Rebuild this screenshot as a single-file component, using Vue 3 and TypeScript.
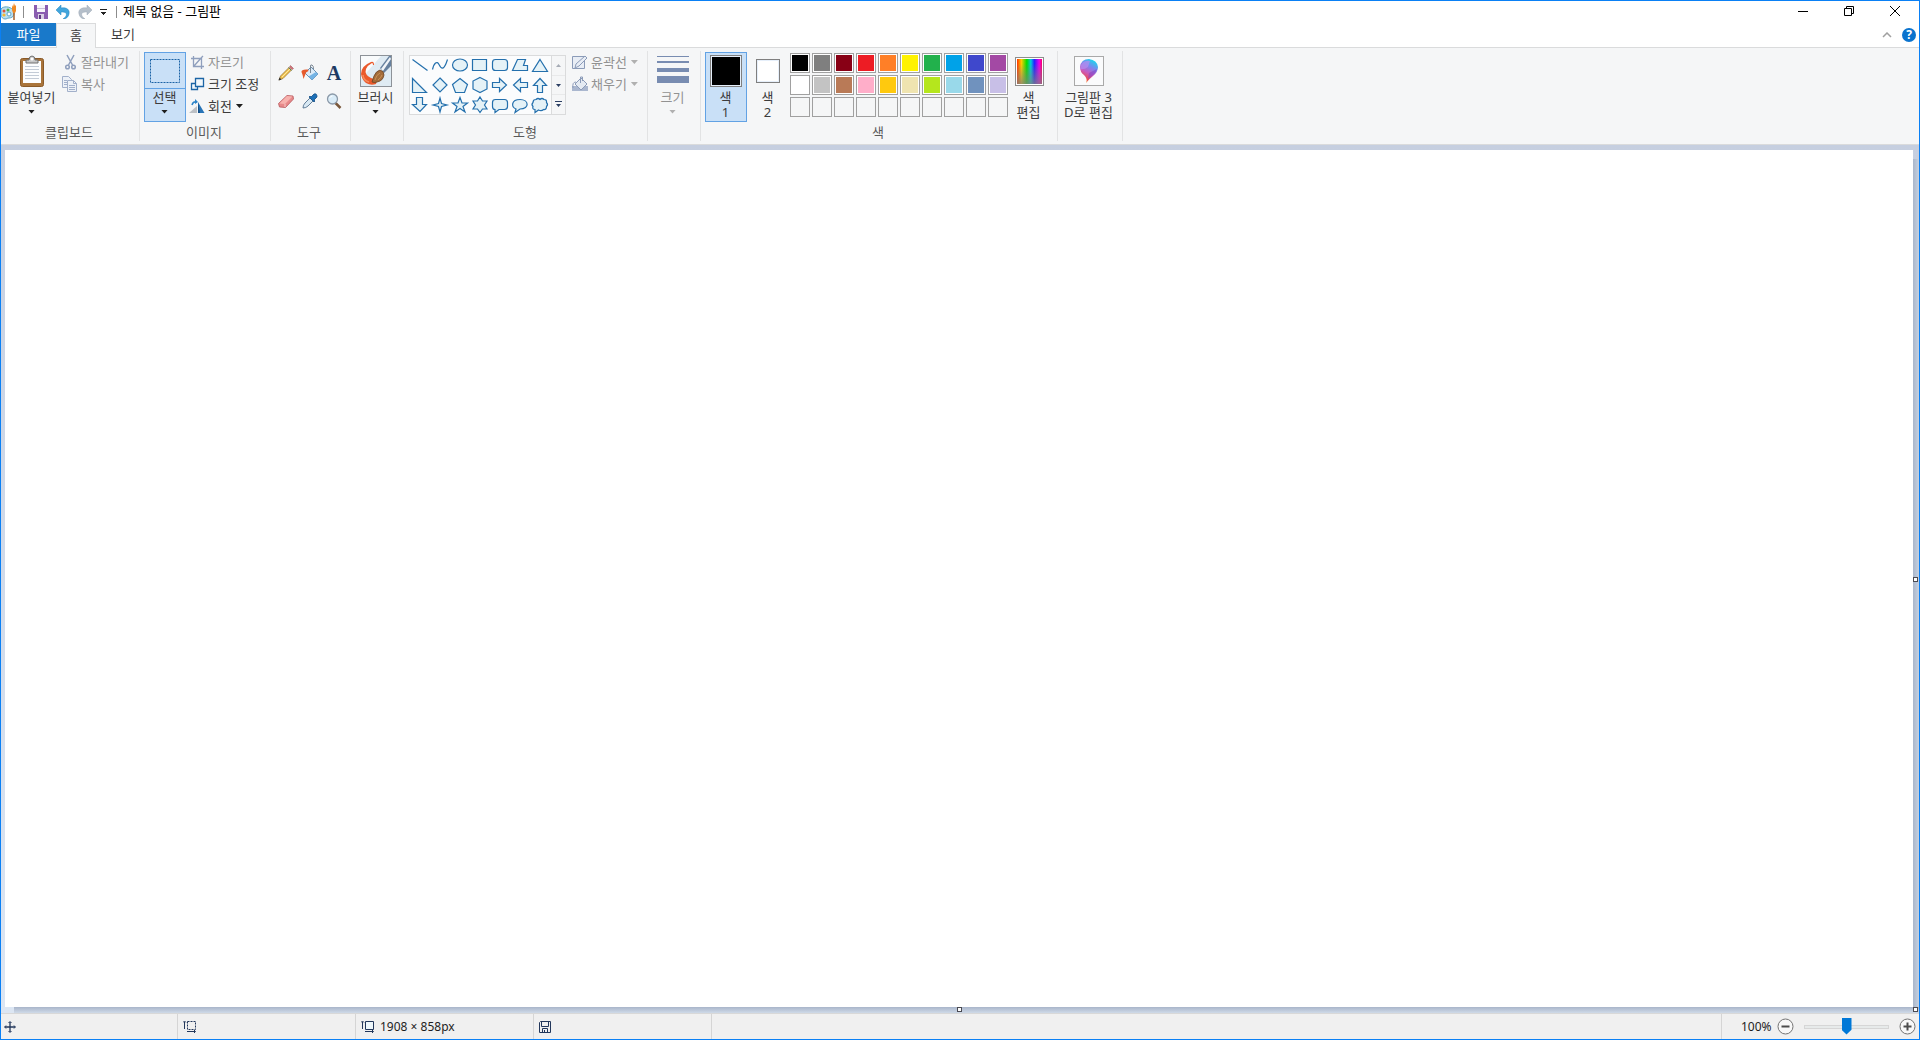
<script setup lang="ts">
import { ref } from 'vue'

interface Shape {
  name: string
  d: string
}

const shapes: Shape[] = [
  { name: '선', d: 'M2.5 4.5L17.5 15.5' },
  { name: '곡선', d: 'M2.5 14.5C4 8 7 5.500 9 9.500S13.500 17 17.500 4.500' },
  { name: '타원', d: 'M2.500 10a7.500 6 0 1 0 15 0a7.500 6 0 1 0-15 0z' },
  { name: '직사각형', d: 'M2.500 4.500h14v11h-14z' },
  { name: '둥근 직사각형', d: 'M5.500 4.500h9q3 0 3 3v5q0 3-3 3h-9q-3 0-3-3v-5q0-3 3-3z' },
  { name: '다각형', d: 'M7.500 4.500h8l-2 6h4v5h-15z' },
  { name: '삼각형', d: 'M10 4.500L17.500 16.500h-15z' },
  { name: '직각 삼각형', d: 'M2.500 3.500L16.500 17.500h-14z' },
  { name: '다이아몬드', d: 'M10 3L17 10L10 17L3 10z' },
  { name: '오각형', d: 'M10 3.500L17.500 9.500L14.500 17.500h-9L2.500 9.500z' },
  { name: '육각형', d: 'M10 2.500L17 6v8L10 17.500L3 14V6z' },
  { name: '오른쪽 화살표', d: 'M2.500 7.500h7v-4L16.500 10l-7 6.500v-4h-7z' },
  { name: '왼쪽 화살표', d: 'M17.500 7.500h-7v-4L3.500 10l7 6.500v-4h7z' },
  { name: '위쪽 화살표', d: 'M7.500 17.500v-7h-4L10 3.500l6.500 7h-4v7z' },
  { name: '아래쪽 화살표', d: 'M6.500 2.500v7h-4L10 16.500l6.500-7h-4v-7z' },
  { name: '4각별', d: 'M10 3L11.500 8.500L17 10L11.500 11.500L10 17L8.500 11.500L3 10L8.500 8.500z' },
  { name: '5각별', d: 'M10 2.500L12 8H17.500L13 11.500L15 17L10 13.500L5 17L7 11.500L2.500 8H8z' },
  { name: '6각별', d: 'M10 2L12.500 6H17L14.500 10L17 14H12.500L10 17.500L7.500 14H3L5.500 10L3 6H7.500z' },
  { name: '둥근 사각형 설명선', d: 'M5.500 4.500h9q3 0 3 3v4q0 3-3 3H9l-4 3v-3q-2.500 0-2.500-3v-4q0-3 3-3z' },
  { name: '타원형 설명선', d: 'M6 14C1 12 1 4.500 10 4.500s10 9.500 0 9.500L5 17.500z' },
  { name: '구름 모양 설명선', d: 'M6 4.500q2-2 4 0q2-2 4 0q3 0 2.500 3q2 2 0 4q0 3.500-3 3q-2 2-5 .5L5 17.500v-3q-3 0-2-3q-2-2 0-4q0-3 3-3z' }
]

const palette: (string | null)[] = [
  '#000000', '#7f7f7f', '#880015', '#ed1c24', '#ff7f27', '#fff200', '#22b14c', '#00a2e8', '#3f48cc', '#a349a4',
  '#ffffff', '#c3c3c3', '#b97a57', '#ffaec9', '#ffc90e', '#efe4b0', '#b5e61d', '#99d9ea', '#7092be', '#c8bfe7',
  null, null, null, null, null, null, null, null, null, null
]

const color1 = ref('#000000')
const color2 = ref('#ffffff')
const active = ref<1 | 2>(1)
const zoom = ref(50)

function pick(color: string | null) {
  if (!color) return
  if (active.value === 1) color1.value = color
  else color2.value = color
}
</script>

<template>
  <div class="window">
    <header class="titlebar">
      <svg class="app-icon" width="16" height="18" viewBox="0 0 16 18">
        <path d="M0 6C2 3 9 3 12 7c2 3 1 8-4 8-2 0-2 1-4 1-2 0-4-2-4-4z" fill="#b9dff1" stroke="#5fa6c9" />
        <circle cx="3" cy="8" r="1.500" fill="#e0533a" /><circle cx="7" cy="7" r="1.500" fill="#55b04b" />
        <circle cx="3" cy="12" r="1.600" fill="#f2b632" /><circle cx="8" cy="11" r="2" fill="#fff" stroke="#5fa6c9" />
        <path d="M13 9v8" stroke="#a5602c" stroke-width="1.500" /><path d="M11 2l1 2 1-4 1 3 1-1v6l-1 2h-2l-1-3z" fill="#f08a24" />
      </svg>
      <span class="tb-sep"></span>
      <button class="quick" aria-label="저장">
        <svg width="14" height="14" viewBox="0 0 14 14"><path d="M0 0h14v14H2l-2-2z" fill="#8a5db0" /><path d="M3 0h8v7H3z" fill="#f7f5fb" /><path d="M3 3h8v1H3z" fill="#c9bfd8" /><path d="M4 9h6v5H4z" fill="#d9d0e4" /><path d="M5 10h2v4H5z" fill="#5c3a82" /></svg>
      </button>
      <button class="quick" aria-label="실행 취소">
        <svg width="14" height="14" viewBox="0 0 14 14"><path d="M0 5L5 0v3c6-1 9 2 8 6-.5 3-3 5-6 5 3-2 4-4 3-6-1-1-3-1-5-1v3z" fill="#41a5dc" stroke="#2387c3" stroke-width=".5" /></svg>
      </button>
      <button class="quick" aria-label="다시 실행">
        <svg width="14" height="14" viewBox="0 0 14 14"><path d="M14 5L9 0v3C3 2 0 5 1 9c.5 3 3 5 6 5-3-2-4-4-3-6 1-1 3-1 5-1v3z" fill="#b5bfca" stroke="#9eabb8" stroke-width=".5" /></svg>
      </button>
      <button class="quick more" aria-label="빠른 실행 도구 모음 사용자 지정">
        <svg width="7" height="7" viewBox="0 0 7 7" shape-rendering="crispEdges"><path d="M0 0h7v1H0zM1 3h5v1H5v1H4v1H3V5H2V4H1z" fill="#222" /></svg>
      </button>
      <span class="tb-sep"></span>
      <h1>제목 없음 - 그림판</h1>
      <div class="controls">
        <button aria-label="최소화"><svg width="12" height="12" viewBox="0 0 12 12"><path d="M1 6.500h10" stroke="#000" /></svg></button>
        <button aria-label="이전 크기로 복원"><svg width="12" height="12" viewBox="0 0 12 12"><path d="M1.500 3.500h7v7h-7zM3.500 3V1.500h7v7H9" fill="none" stroke="#000" /></svg></button>
        <button aria-label="닫기"><svg width="12" height="12" viewBox="0 0 12 12"><path d="M1 1l10 10M11 1L1 11" stroke="#000" /></svg></button>
      </div>
    </header>

    <nav class="tabs">
      <button class="tab file">파일</button>
      <button class="tab current">홈</button>
      <button class="tab view">보기</button>
      <div class="tab-tools">
        <button aria-label="리본 최소화"><svg width="10" height="6" viewBox="0 0 10 6"><path d="M1 5l4-4 4 4" fill="none" stroke="#a0a0a0" stroke-width="1.500" /></svg></button>
        <button class="help" aria-label="도움말">?</button>
      </div>
    </nav>

    <main class="ribbon">
      <section class="group clipboard">
        <div class="body">
          <button class="big wide">
            <span class="pic">
              <svg width="26" height="32" viewBox="0 0 26 32">
                <rect x="1.500" y="3.500" width="23" height="28" rx="2" fill="#a9743a" stroke="#8a5a28" />
                <rect x="4" y="6" width="18" height="22" fill="#fcfdfe" /><path d="M6 11.500h14M6 14.500h14M6 17.500h14M6 20.500h14M6 23.500h14" stroke="#c3cbd6" />
                <path d="M7 8V5h3q0-4 3-4t3 4h3v3z" fill="#c8c8c8" stroke="#707070" /><circle cx="13" cy="4" r="1.500" fill="#fff" />
              </svg>
            </span>
            <span class="line">붙여넣기</span>
            <span class="line"><i class="arrow"></i></span>
          </button>
          <div class="stack">
            <button class="small" disabled>
              <svg width="16" height="16" viewBox="0 0 16 16" fill="none" stroke="#8f9fbd" stroke-width="1.500"><path d="M5 1l5.500 10M12 1L6.500 11" /><circle cx="5.500" cy="13" r="1.800" /><circle cx="11.500" cy="13" r="1.800" /></svg>잘라내기
            </button>
            <button class="small" disabled>
              <svg width="16" height="16" viewBox="0 0 16 16" fill="#edf1f7" stroke="#a2b0ca"><path d="M.5.5h6l3 3v8h-9z" /><path d="M2 4.500h3M2 6.500h3M2 8.500h3" /><path d="M5.500 4.500h6l3 3v8h-9zM11.500 4.500v3h3M7 9.500h6M7 11.500h6M7 13.500h6" /></svg>복사
            </button>
          </div>
        </div>
        <h2>클립보드</h2>
      </section>

      <section class="group image">
        <div class="body">
          <button class="big selected split">
            <span class="pic">
              <svg width="32" height="26" viewBox="0 0 32 26"><rect x="1.500" y="1.500" width="29" height="23" fill="none" stroke="#1a62a5" stroke-dasharray="2 1" /></svg>
            </span>
            <span class="line">선택</span>
            <span class="line"><i class="arrow"></i></span>
          </button>
          <div class="stack">
            <button class="small" disabled>
              <svg width="16" height="16" viewBox="0 0 16 16" fill="none" stroke="#8f9fbd"><path d="M2 4.500h10.500V15M4.500 2v10.500H15M5 12l8-9M13 3l1-1" stroke-width="1.300" /></svg>자르기
            </button>
            <button class="small">
              <svg width="16" height="16" viewBox="0 0 16 16" fill="#f2f8fc" stroke="#1c65a5" stroke-width="1.300"><path d="M2.500 7.500h6v6h-6z" /><path d="M6.500 2.500h8v8h-8z" /></svg>크기 조정
            </button>
            <button class="small">
              <svg width="16" height="16" viewBox="0 0 16 16"><path d="M0 15h8V8z" fill="#bcc0c5" /><path d="M9 15V4l6.500 11z" fill="#2874b7" /><path d="M9 15V4l2 11z" fill="#124f88" /><path d="M3 7q1-4 5-3" fill="none" stroke="#2d84c8" stroke-width="1.500" /><path d="M6 1l3 3-3 2z" fill="#2d84c8" /></svg>회전<i class="arrow"></i>
            </button>
          </div>
        </div>
        <h2>이미지</h2>
      </section>

      <section class="group tools">
        <div class="body tool-grid">
          <button aria-label="연필"><svg width="16" height="16" viewBox="0 0 16 16"><path d="M1 15l1.500-4 8.500-8.500 2.500 2.500L5 13.500z" fill="#f1c34f" stroke="#8c6a30" stroke-width=".7" /><path d="M4 12l8-8" stroke="#fbe7a4" /><path d="M11.500 2l1-1.500 3 3L14 4.500z" fill="#d97178" stroke="#8f5055" stroke-width=".5" /><path d="M10.500 2.500l3 3" stroke="#5f7f52" /><path d="M.5 15.500l1-3 2 2z" fill="#333" /></svg></button>
          <button aria-label="색 채우기"><svg width="18" height="18" viewBox="0 0 18 18"><path d="M4 9l6-6 7 7-6 6z" fill="#dcebf8" stroke="#6c8fb0" /><path d="M7.500 12.500L15 8l2 2-6 6z" fill="#75b4e5" /><path d="M9.500 9V2q0-1.500 1.500-1t1.500 4" fill="none" stroke="#7a8794" /><path d="M7 5.500Q0 5 .5 8q1 2 2 7l2-5q0-2 3-3z" fill="#e65a2c" /></svg></button>
          <button class="letter">A</button>
          <button aria-label="지우개"><svg width="16" height="16" viewBox="0 0 16 16"><path d="M.5 10.500L9 2.500l6 .5.5 3-8 8.500-6-.5z" fill="#e7898a" stroke="#b8585d" stroke-width=".8" /><path d="M1.500 10.500l5.500.5L14.500 3.500 9 3z" fill="#f7b2ae" /><path d="M7 11v3" stroke="#f5cbc8" /></svg></button>
          <button aria-label="색 선택"><svg width="16" height="16" viewBox="0 0 16 16"><path d="M1 15q0-3 2-5l5-5 3 3-5 5q-2 2-5 2z" fill="#d8e8f3" stroke="#53728f" stroke-width=".9" /><path d="M7 4l1-1 1 1 3-3q3-1 3 3l-3 3 1 1-1 1z" fill="#1d70b7" stroke="#174f87" stroke-width=".8" /></svg></button>
          <button aria-label="돋보기"><svg width="16" height="16" viewBox="0 0 16 16"><path d="M9 9.500l5.500 5.500" stroke="#79573a" stroke-width="2.500" /><circle cx="6.500" cy="6" r="5" fill="#d9ecf8" stroke="#8b99a8" stroke-width="1.300" /><path d="M3.500 5q1-2 3-2" fill="none" stroke="#fff" /></svg></button>
        </div>
        <h2>도구</h2>
      </section>

      <section class="group brush">
        <div class="body">
          <button class="big">
            <span class="pic">
              <svg width="32" height="32" viewBox="0 0 32 32">
                <rect x=".5" y=".5" width="31" height="31" fill="#dfebf3" stroke="#8d9298" />
                <path d="M1 1h20L1 24z" fill="#f9fbfc" />
                <path d="M14 10Q14 6 11 7 1 11 1 19q1 6 5 9 5 3 10 1l1-4-6-2Q4 20 6 14q2-4 6-6 1 0 1 2z" fill="#ea5a2c" />
                <path d="M3 20q0 5 6 7" fill="none" stroke="#f58a5c" stroke-width="1.500" />
                <path d="M20 13L29 1h2v10l-7 7z" fill="#66809e" /><path d="M21 14L30 2l1 2-8 12z" fill="#f1f5f9" />
                <path d="M12 27q1-3 2-6 2-5 6-6 4 1 4 5-1 6-7 7-2 1-5 0z" fill="#a46d3b" stroke="#6b4424" stroke-width=".8" /><path d="M15 25q1-5 5-7M18 25q3-2 4-5" fill="none" stroke="#c99257" />
              </svg>
            </span>
            <span class="line">브러시</span>
            <span class="line"><i class="arrow"></i></span>
          </button>
        </div>
      </section>

      <section class="group shapes">
        <div class="body">
          <div class="gallery">
            <div class="shape-grid">
              <button v-for="shape in shapes" :key="shape.name" :aria-label="shape.name">
                <svg width="20" height="20" viewBox="0 0 20 20"><path :d="shape.d" :fill="shape.name === '선' || shape.name === '곡선' ? 'none' : '#e5f2f7'" stroke="#2470ad" stroke-width="1.200" /></svg>
              </button>
            </div>
            <div class="scroller">
              <button aria-label="이전 행" disabled><svg width="7" height="7" viewBox="0 0 7 7"><path d="M1 5l2.500-3L6 5z" fill="#a6abb5" /></svg></button>
              <button aria-label="다음 행"><svg width="7" height="7" viewBox="0 0 7 7"><path d="M1 2h5L3.500 5z" fill="#2b3f63" /></svg></button>
              <button aria-label="자세히"><svg width="7" height="7" viewBox="0 0 7 7"><path d="M0 0h7v1H0zM1 3h5L3.500 6z" fill="#2b3f63" /></svg></button>
            </div>
          </div>
          <div class="stack">
            <button class="small" disabled>
              <svg width="16" height="16" viewBox="0 0 16 16" fill="#e8edf5" stroke="#8b9bb8"><path d="M.5 2.500h12v12H.5z" /><path d="M3 14l1-4 9-8 2 2-8 8z" /></svg>윤곽선<i class="arrow"></i>
            </button>
            <button class="small" disabled>
              <svg width="16" height="16" viewBox="0 0 16 16"><path d="M0 10h16v5H0z" fill="#aab7cf" /><path d="M3 8l6-6 6 6-6 6z" fill="#e4eaf2" stroke="#8b9bb8" /><path d="M8.500 7V1h2v4M4 6q-4 0-3 6" fill="none" stroke="#8b9bb8" /></svg>채우기<i class="arrow"></i>
            </button>
          </div>
        </div>
        <h2>도형</h2>
      </section>

      <section class="group size">
        <div class="body">
          <button class="big" disabled>
            <span class="pic">
              <svg width="32" height="32" viewBox="0 0 32 32" fill="#788cb1"><path d="M0 1h32v1H0zM0 6h32v2H0zM0 13h32v4H0zM0 21h32v7H0z" /></svg>
            </span>
            <span class="line">크기</span>
            <span class="line"><i class="arrow"></i></span>
          </button>
        </div>
      </section>

      <section class="group colors">
        <div class="body">
          <button class="big" :class="{ selected: active === 1 }" @click="active = 1">
            <span class="pic"><span class="swatch first" :style="{ backgroundColor: color1 }"></span></span>
            <span class="line">색</span><span class="line">1</span>
          </button>
          <button class="big" :class="{ selected: active === 2 }" @click="active = 2">
            <span class="pic"><span class="swatch second" :style="{ backgroundColor: color2 }"></span></span>
            <span class="line">색</span><span class="line">2</span>
          </button>
          <div class="palette">
            <button v-for="(color, i) in palette" :key="i" :class="{ empty: !color }" :disabled="!color" :aria-label="color ?? '사용자 지정 색'" :style="{ backgroundColor: color ?? undefined }" @click="pick(color)"></button>
          </div>
          <button class="big">
            <span class="pic"><span class="spectrum"></span></span>
            <span class="line">색</span><span class="line">편집</span>
          </button>
        </div>
        <h2>색</h2>
      </section>

      <section class="group paint3d">
        <div class="body">
          <button class="big wide">
            <span class="pic">
              <svg width="30" height="30" viewBox="0 0 30 30">
                <defs>
                  <linearGradient id="drop" x1=".2" y1="1" x2=".6" y2="0"><stop offset="0" stop-color="#f5a51c" /><stop offset=".2" stop-color="#ec4a52" /><stop offset=".45" stop-color="#c75bc0" /><stop offset=".7" stop-color="#7f84ee" /><stop offset="1" stop-color="#1fd3ee" /></linearGradient>
                </defs>
                <rect x=".5" y=".5" width="29" height="29" fill="#fafbfc" stroke="#a9a9a9" />
                <path d="M12 27q2-4-2-8Q6 16 6 11q1-8 9-8 8 1 9 8 0 5-5 9-4 3-7 7z" fill="url(#drop)" />
                <path d="M7 9q3-5 9-4l-2 6q-4 3-8 2z" fill="#b78bf0" opacity=".7" /><path d="M23 13q-1 4-5 7l-4 3 1-6z" fill="#7a3fc4" opacity=".5" />
              </svg>
            </span>
            <span class="line">그림판 3</span><span class="line">D로 편집</span>
          </button>
        </div>
      </section>
    </main>

    <div class="workspace">
      <div class="canvas-area">
        <div class="canvas"></div>
        <div class="shade-right"></div>
        <div class="shade-bottom"></div>
        <span class="handle east"></span>
        <span class="handle south"></span>
        <span class="handle corner"></span>
      </div>
    </div>

    <footer class="status">
      <div class="cell"><svg width="12" height="12" viewBox="0 0 12 12" fill="none" stroke="#22375b"><path d="M6 1v10M1 6h10" stroke-width="1.300" /><path d="M4.500 2L6 .5 7.500 2M4.500 10L6 11.500 7.500 10M2 4.500L.5 6 2 7.500M10 4.500L11.500 6 10 7.500" /></svg></div>
      <div class="cell"><svg width="14" height="14" viewBox="0 0 14 14" fill="none" stroke="#22375b"><path d="M4.500 1.500h8v8h-8z" stroke-dasharray="2 1" /><path d="M1.500 9V2M0 2.500L1.500 1 3 2.500M4 11.500h8M11 10l1.500 1.500L11 13" /></svg></div>
      <div class="cell"><svg width="14" height="14" viewBox="0 0 14 14" fill="none" stroke="#22375b"><path d="M4.500 1.500h8v8h-8z" fill="#eef7fb" /><path d="M1.500 9V2M0 2.500L1.500 1 3 2.500M4 11.500h8M11 10l1.500 1.500L11 13" /></svg>1908 × 858px</div>
      <div class="cell"><svg width="12" height="12" viewBox="0 0 12 12" fill="none" stroke="#22375b"><path d="M1.500.5h10v11h-11V1.500z" /><path d="M2.500.5v5h7v-5M3.500 11.500v-4h5v4M5.500 9v2" /></svg></div>
      <div class="zoom">
        <label for="zoom">100%</label>
        <button aria-label="축소"><svg width="17" height="17" viewBox="0 0 17 17"><circle cx="8.500" cy="8.500" r="7.500" fill="#f8f8f8" stroke="#747474" /><path d="M4.500 8.500h8" stroke="#4d4d4d" stroke-width="2" /></svg></button>
        <input id="zoom" v-model="zoom" type="range" min="0" max="100">
        <button aria-label="확대"><svg width="17" height="17" viewBox="0 0 17 17"><circle cx="8.500" cy="8.500" r="7.500" fill="#f8f8f8" stroke="#747474" /><path d="M4.500 8.500h8M8.500 4.500v8" stroke="#4d4d4d" stroke-width="2" /></svg></button>
      </div>
    </footer>
  </div>
</template>

<style>
body {
  margin: 0;
}
</style>

<style scoped>
* {
  box-sizing: border-box;
}
.window {
  display: flex;
  flex-direction: column;
  min-height: 100vh;
  border: 1px solid #0a80f5;
  background: #fff;
  color: #3c3c3c;
  font: 13px/16px 'Noto Sans', 'Noto Sans CJK KR', sans-serif;
}
button {
  display: flex;
  align-items: center;
  justify-content: center;
  margin: 0;
  padding: 0;
  border: 0;
  background: none;
  color: inherit;
  font: inherit;
  white-space: nowrap;
}
svg {
  display: block;
  flex: none;
}
h1,
h2 {
  margin: 0;
  font: inherit;
}
.arrow {
  width: 7px;
  height: 4px;
  background: #1e1e1e;
  clip-path: polygon(0 0, 100% 0, 50% 100%);
}
button:disabled .arrow {
  background: #b0b0b0;
}

/* title bar */
.titlebar {
  display: flex;
  align-items: center;
  height: 22px;
}
.tb-sep {
  width: 1px;
  height: 12px;
  margin: 0 6px;
  background: #8c8c8c;
}
.quick {
  width: 22px;
  height: 20px;
}
.more {
  width: 14px;
}
.titlebar h1 {
  padding-bottom: 2px;
  color: #000;
}
.controls {
  display: flex;
  margin-left: auto;
  padding-right: 1px;
}
.controls button {
  width: 46px;
  height: 20px;
  padding-bottom: 2px;
}

/* tabs */
.tabs {
  display: flex;
  height: 24px;
}
.tab {
  height: 24px;
  padding-bottom: 2px;
}
.file {
  width: 55px;
  height: 23px;
  background: #1979ca;
  color: #fff;
}
.current {
  width: 40px;
  height: 25px;
  border: 1px solid #dadbdc;
  border-bottom: 0;
  background: #f5f6f7;
  z-index: 1;
}
.view {
  width: 54px;
}
.tab-tools {
  display: flex;
  align-items: center;
  gap: 10px;
  margin-left: auto;
  padding-right: 3px;
}
.help {
  width: 14px;
  height: 14px;
  border-radius: 50%;
  background: #0b73ce;
  color: #fff;
  font-size: 12px;
  font-weight: 700;
}

/* ribbon */
.ribbon {
  display: flex;
  height: 98px;
  padding: 3px 0;
  border-top: 1px solid #dadbdc;
  border-bottom: 1px solid #dadbdc;
  background: #f5f6f7;
}
.group {
  display: flex;
  flex-direction: column;
  flex: none;
  padding-left: 4px;
  border-right: 1px solid #e2e3e4;
}
.group h2 {
  margin: auto 0 0 -6px;
  padding-bottom: 1px;
  color: #5a5a5a;
  text-align: center;
}
.body {
  display: flex;
  align-items: flex-start;
}
.clipboard {
  width: 139px;
}
.image {
  width: 131px;
}
.tools {
  width: 80px;
}
.brush,
.size {
  width: 53px;
}
.shapes {
  width: 244px;
}
.colors {
  width: 357px;
}
.paint3d {
  width: 65px;
}
.big {
  flex-direction: column;
  justify-content: flex-start;
  width: 42px;
  height: 70px;
  margin-top: 1px;
  border: 1px solid transparent;
}
.wide {
  width: 54px;
}
.pic {
  display: flex;
  align-items: center;
  justify-content: center;
  width: 100%;
  height: 36px;
}
.line {
  display: flex;
  align-items: center;
  justify-content: center;
  height: 15px;
  padding-right: 1px;
}
.big:disabled,
.small:disabled {
  color: #929292;
}
.selected {
  border-color: #62a2e4;
  background: #c9e0f7;
}
.split .pic {
  border-bottom: 1px solid #62a2e4;
}
.stack {
  margin-left: 3px;
}
.small {
  gap: 3px;
  height: 22px;
}
.small .arrow {
  margin-left: 1px;
}
.tool-grid {
  display: grid;
  grid-template-columns: repeat(3, 24px);
  grid-auto-rows: 28px;
  align-items: stretch;
  padding-top: 8px;
}
.tools {
  padding-left: 3px;
}
.letter {
  color: #1e3a63;
  font: 700 20px/20px 'Liberation Serif', serif;
}
.shapes {
  padding-left: 5px;
}
.gallery {
  display: flex;
  height: 60px;
  margin: 4px 3px 0 0;
  border: 1px solid #dadbdc;
  background: #fbfcfd;
}
.shape-grid {
  display: grid;
  grid-template-columns: repeat(7, 20px);
  grid-auto-rows: 20px;
  align-content: center;
  width: 141px;
  height: 58px;
}
.shape-grid button {
  height: 20px;
}
.scroller {
  display: flex;
  flex-direction: column;
  width: 14px;
  border-left: 1px solid #dadbdc;
  background: #f5f6f7;
}
.scroller button {
  flex: 1;
}
.scroller button + button {
  border-top: 1px solid #e8e9ea;
}
.swatch {
  border: 1px solid #7f7f7f;
  box-shadow: inset 0 0 0 1px #e6effa;
}
.first {
  width: 32px;
  height: 32px;
}
.second {
  width: 24px;
  height: 24px;
}
.palette {
  display: grid;
  grid-template-columns: repeat(10, 20px);
  grid-auto-rows: 20px;
  gap: 2px;
  margin: 2px 0 0 1px;
}
.palette button {
  border: 1px solid #a0a0a0;
  box-shadow: inset 0 0 0 1px #fff;
}
.palette .empty {
  box-shadow: none;
}
.spectrum {
  width: 29px;
  height: 29px;
  border: 1px solid #8d8d8d;
  outline: 1px solid #fff;
  outline-offset: -2px;
  background: linear-gradient(to bottom, transparent 20%, #808080cc), linear-gradient(to right, #f10, #fc0 20%, #0d0 40%, #0cd 55%, #22f 68%, #e0e 86%, #f03);
}

/* drawing area */
.workspace {
  display: flex;
  flex: 1;
  padding: 5px 0 0 4px;
  background: linear-gradient(#c6cfe0, #dce6f3);
}
.canvas-area {
  position: relative;
  display: grid;
  flex: 1;
  grid-template: 1fr 6px / 1fr 6px;
}
.canvas {
  background: #fff;
}
.shade-right {
  margin-top: 9px;
  background: linear-gradient(to right, #aab6ca, #c6d2e2);
}
.shade-bottom {
  grid-column: 1 / 3;
  margin-left: 9px;
  background: linear-gradient(#a9b5ca, #cfdae8);
}
.handle {
  position: absolute;
  width: 5px;
  height: 5px;
  border: 1px solid #4a4a52;
  background: #fff;
}
.east {
  right: 1px;
  top: calc(50% - 5px);
}
.south {
  left: calc(50% - 5px);
  bottom: 1px;
}
.corner {
  right: 1px;
  bottom: 1px;
}

/* status bar */
.status {
  display: flex;
  height: 26px;
  border-top: 1px solid #d8d8d8;
  background: #f0f0f0;
  color: #1e1e1e;
  font-size: 12px;
}
.cell {
  display: flex;
  align-items: center;
  gap: 5px;
  width: 178px;
  padding-left: 5px;
  border-right: 1px solid #d5d5d5;
}
.cell:first-child {
  width: 177px;
  padding-left: 3px;
}
.zoom {
  display: flex;
  align-items: center;
  width: 198px;
  margin-left: auto;
  padding: 0 2px 0 19px;
  border-left: 1px solid #d5d5d5;
}
.zoom label {
  width: 36px;
}
.zoom input {
  width: 85px;
  height: 20px;
  margin: 0 10px;
  appearance: none;
  background: none;
}
.zoom input::-webkit-slider-runnable-track {
  height: 4px;
  border: 1px solid #d6d6d6;
  background: #e7eaea;
}
.zoom input::-webkit-slider-thumb {
  width: 10px;
  height: 17px;
  margin-top: -8px;
  appearance: none;
  border: 0;
  border-radius: 0;
  background: #0078d7;
  clip-path: polygon(0 0, 100% 0, 100% 72%, 50% 100%, 0 72%);
}
</style>
